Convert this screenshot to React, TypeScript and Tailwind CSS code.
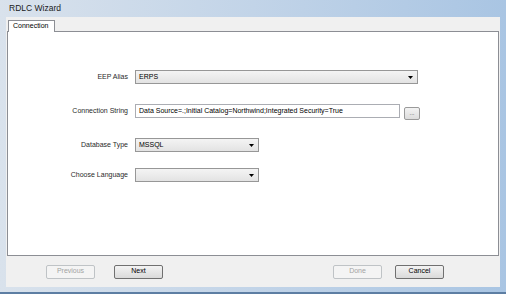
import React from "react";

const font = { fontFamily: '"Liberation Sans", Arial, sans-serif' };

function Arrow() {
  return (
    <svg width="5" height="3" viewBox="0 0 5 3" className="shrink-0">
      <path d="M0 0 H5 L2.5 3 Z" fill="#000" />
    </svg>
  );
}

function Dropdown({ value, width }: { value: string; width: string }) {
  return (
    <div
      className={`${width} flex h-[14px] items-center justify-between border border-[#979797] bg-gradient-to-b from-[#f4f4f4] to-[#e3e3e3] pl-[3px] pr-[4px] text-[7px] text-black`}
    >
      <span>{value}</span>
      <Arrow />
    </div>
  );
}

function Row({ label, children }: { label: string; children: React.ReactNode }) {
  return (
    <div className="flex h-[14px] items-center">
      <div className="w-[121px] pr-[1px] text-right text-[7px] text-[#2a2a2a]">{label}</div>
      <div className="ml-[6px] flex items-center">{children}</div>
    </div>
  );
}

function Button({ label, disabled }: { label: string; disabled?: boolean }) {
  return (
    <div
      className={
        disabled
          ? "flex h-[14px] w-[49px] items-center justify-center rounded-[2px] border border-[#bfc3c6] bg-[#f4f4f4] text-[7px] text-[#a3a3a3]"
          : "flex h-[14px] w-[49px] items-center justify-center rounded-[2px] border border-[#707070] bg-gradient-to-b from-[#f3f3f3] to-[#dadada] text-[7px] text-black"
      }
    >
      {label}
    </div>
  );
}

export default function App() {
  return (
    <div
      style={font}
      className="flex h-[294px] w-[506px] flex-col overflow-hidden bg-gradient-to-r from-[#d9e2ec] via-[#c2d4e8] to-[#a9c5e3]"
    >
      <div className="flex h-[17px] shrink-0 items-center pl-[9px] text-[8.5px] text-[#1a1a1a]">
        RDLC Wizard
      </div>
      <div className="mx-[6px] flex flex-1 flex-col bg-[#f0f0f0]">
        <div className="flex h-[14px] items-end pl-[2px]">
          <div className="relative z-10 -mb-[1px] flex h-[12px] w-[47px] items-center border border-b-0 border-[#8c8e94] bg-white pl-[4px] text-[7px] text-black">
            Connection
          </div>
        </div>
        <div className="mr-[1px] ml-[1px] flex h-[225px] flex-col gap-[20px] border border-[#8c8e94] bg-white pt-[38px]">
          <Row label="EEP Alias">
            <Dropdown value="ERPS" width="w-[283px]" />
          </Row>
          <Row label="Connection String">
            <div className="flex h-[14px] w-[265px] items-center border border-[#abadb3] bg-white pl-[3px] text-[7px] text-black">
              Data Source=.;Initial Catalog=Northwind;Integrated Security=True
            </div>
            <div className="relative top-[2px] ml-[4px] flex h-[13px] w-[16px] items-center justify-center rounded-[2px] border border-[#9a9a9a] bg-gradient-to-b from-[#f3f3f3] to-[#dcdcdc] text-[6px] leading-none text-[#444]">
              ...
            </div>
          </Row>
          <Row label="Database Type">
            <Dropdown value="MSSQL" width="w-[124px]" />
          </Row>
          <div className="-mt-[4px]">
            <Row label="Choose Language">
              <Dropdown value="" width="w-[124px]" />
            </Row>
          </div>
        </div>
        <div className="flex flex-1 items-center pl-[40px]">
          <Button label="Previous" disabled />
          <div className="ml-[19px]">
            <Button label="Next" />
          </div>
          <div className="ml-[170px]">
            <Button label="Done" disabled />
          </div>
          <div className="ml-[13px]">
            <Button label="Cancel" />
          </div>
        </div>
      </div>
      <div className="h-[7px] shrink-0 border-b-[2px] border-[#5d7ea3]" />
    </div>
  );
}
